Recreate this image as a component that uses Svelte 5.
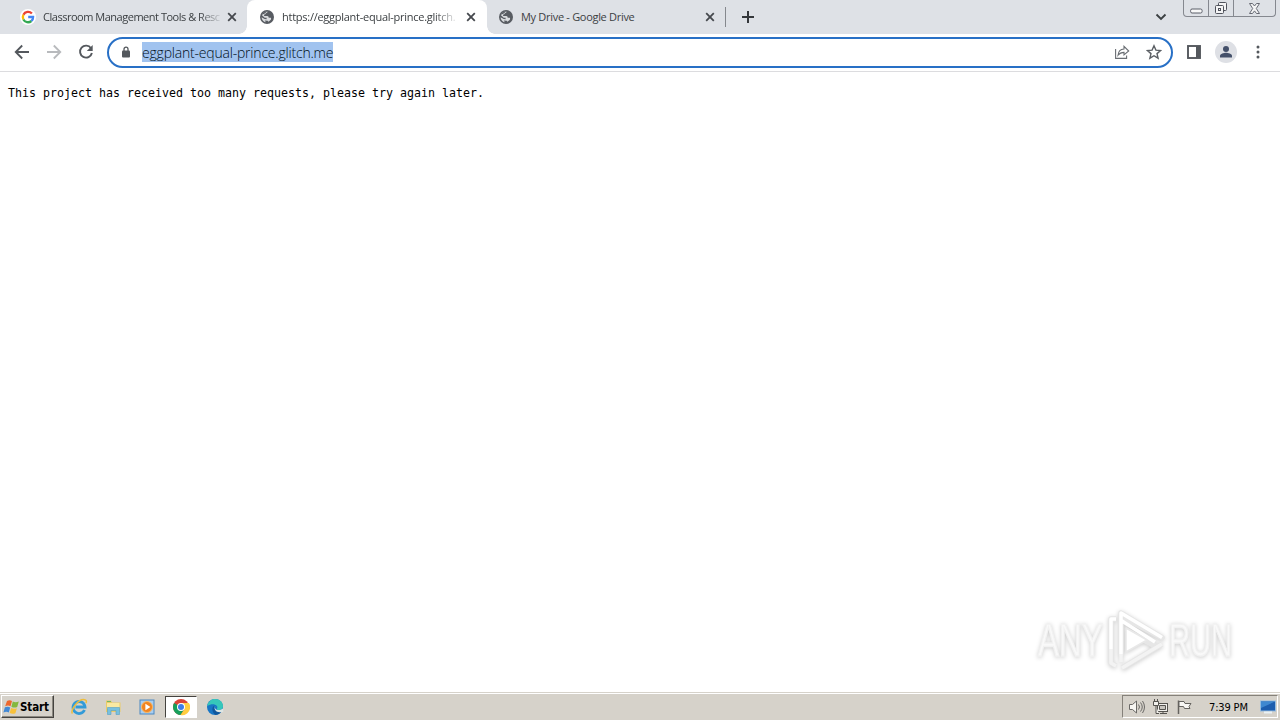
<script lang="ts">
	interface Tab {
		title: string;
		icon: 'google' | 'globe';
		active: boolean;
		fade: boolean;
		tracking: number;
	}

	const tabs: Tab[] = [
		{ title: 'Classroom Management Tools & Resc', icon: 'google', active: false, fade: true, tracking: -0.48 },
		{ title: 'https://eggplant-equal-prince.glitch.', icon: 'globe', active: true, fade: true, tracking: -0.26 },
		{ title: 'My Drive - Google Drive', icon: 'globe', active: false, fade: false, tracking: -0.3 }
	];

	let url = $state('eggplant-equal-prince.glitch.me');
	let clock = $state('7:39 PM');
</script>

{#snippet googleIcon()}
	<svg class="favicon" viewBox="0 0 16 16">
		<circle cx="8" cy="8" r="8" fill="#fff" />
		<g fill="none" stroke-width="2.3">
			<path d="M11.9 4.5A5.2 5.2 0 0 0 3.4 5.7" stroke="#ea4335" />
			<path d="M3.4 5.7a5.2 5.2 0 0 0 0 4.7" stroke="#fbbc05" />
			<path d="M3.4 10.4a5.2 5.2 0 0 0 8 1.6" stroke="#34a853" />
			<path d="M11.4 12A5.2 5.2 0 0 0 13.1 8H8.2" stroke="#4285f4" />
		</g>
	</svg>
{/snippet}

{#snippet globeIcon()}
	<svg class="favicon" viewBox="0 0 16 16">
		<circle cx="8" cy="8" r="7" fill="#585c62" />
		<path
			d="M8.5 2.600c0 1.200-.6 1.600-1.700 1.600-.3 1-.8 1.300-1.700 1.300v1.500h3.200c1 .1 1.400.8 1.400 1.700h2.100c.4.4.3 1.100.2 1.800-.7.900-1.700 1.700-2.800 2.300l-.5-1.100-3-.2 1.200 1.700C4.500 12.700 2.600 10.900 2.600 8.200l3 1.900 2 .1V8.700H5.700L3 6.300C3.700 4.200 5.800 2.500 8.500 2.600z"
			fill="#eceef0"
			opacity=".88"
		/>
		<path d="M3.300 5.800L6 4.300l2.300-1.700h-2L4 4z" fill="#585c62" />
	</svg>
{/snippet}

<div class="screen">
	<header class="tab-strip">
		<div class="tabs">
			{#each tabs as tab}
				<div class="tab" class:active={tab.active}>
					{#if tab.icon === 'google'}
						{@render googleIcon()}
					{:else}
						{@render globeIcon()}
					{/if}
					<span class="tab-title" class:fade={tab.fade} style="letter-spacing: {tab.tracking}px">{tab.title}</span>
					<svg class="tab-close" viewBox="0 0 10 10">
						<path d="M1.2 1.2l7.6 7.6M8.8 1.2l-7.6 7.6" stroke="#45484d" stroke-width="1.8" />
					</svg>
				</div>
			{/each}
		</div>
		<span class="separator"></span>
		<svg class="new-tab" viewBox="0 0 12 12">
			<path d="M6 0v12M0 6h12" stroke="#34373b" stroke-width="2" />
		</svg>
		<svg class="tab-search" viewBox="0 0 12 8">
			<path d="M1.5 1.5L6 6l4.5-4.5" fill="none" stroke="#3c4043" stroke-width="1.9" />
		</svg>
		<div class="window-controls">
			<span class="control minimize">
				<svg viewBox="0 0 13 6"><rect x=".6" y="1" width="11.5" height="4" rx="1.5" fill="#f8f8f8" stroke="#5b5e68" /></svg>
			</span>
			<span class="control restore">
				<svg viewBox="0 0 14 14" fill="#f4f4f5" stroke="#50535c">
					<rect x="4.5" y="1.5" width="8" height="8" rx="1" />
					<rect x="1.5" y="4.5" width="8" height="8" rx="1" />
					<rect x="4.5" y="7.5" width="2" height="2" />
				</svg>
			</span>
			<span class="control close">
				<svg viewBox="0 0 13 11">
					<path d="M1.5.5h3l2 2.5 2-2.5h3L8.300 5.500l3.200 5h-3l-2-2.600-2 2.600h-3l3.200-5z" fill="#f4f4f5" stroke="#666973" />
				</svg>
			</span>
		</div>
	</header>

	<nav class="toolbar">
		<svg class="nav-icon" viewBox="0 0 16 16" fill="none" stroke="#54585d" stroke-width="1.8">
			<path d="M15 8H2M8.2 1.5L1.7 8l6.5 6.5" />
		</svg>
		<svg class="nav-icon" viewBox="0 0 16 16" fill="none" stroke="#b8babd" stroke-width="1.8">
			<path d="M1 8h13M7.8 1.5L14.3 8l-6.5 6.5" />
		</svg>
		<svg class="nav-icon" viewBox="0 0 16 16">
			<path d="M13 4.2A6 6 0 1 0 13.9 9" fill="none" stroke="#54585d" stroke-width="1.9" />
			<path d="M14.7 1v6H8.8z" fill="#54585d" />
		</svg>
		<div class="omnibox">
			<svg class="lock" viewBox="0 0 10 12">
				<rect x="1" y="4.5" width="8" height="7" rx="1" fill="#54585d" />
				<path d="M3 5V3.2a2 2 0 0 1 4 0V5" fill="none" stroke="#54585d" stroke-width="1.3" />
			</svg>
			<span class="url">{url}</span>
			<svg class="share" viewBox="0 0 16 16" fill="none" stroke="#6a6e73" stroke-width="1.1">
				<path d="M1.6 5v9.4h11v-2.800" />
				<path d="M4 11.200c.4-4 2.400-6 6-6.200V2.400L14.700 7 10 10.900V8.400c-2.600 0-4.500.9-6 2.800z" />
			</svg>
			<svg class="star" viewBox="0 0 16 16">
				<path d="M8 1.800l1.900 4.300 4.700.4-3.600 3.100 1.100 4.600L8 11.700l-4.100 2.500L5 9.600 1.400 6.500l4.700-.4z" fill="none" stroke="#5b5f64" stroke-width="1.4" />
			</svg>
		</div>
		<svg class="side-panel" viewBox="0 0 14 14">
			<rect x="1" y="1" width="12" height="12" fill="#fff" stroke="#54585d" stroke-width="1.9" />
			<path d="M9 1h4v12H9z" fill="#54585d" />
		</svg>
		<svg class="avatar" viewBox="0 0 22 22">
			<circle cx="11" cy="11" r="11" fill="#dee0e5" />
			<circle cx="11" cy="8" r="3" fill="#44506a" />
			<path d="M5 16.500v-1.700c0-2 4-3 6-3s6 1 6 3v1.700z" fill="#44506a" />
		</svg>
		<svg class="menu" viewBox="0 0 4 14" fill="#54585d">
			<circle cx="2" cy="2" r="1.5" />
			<circle cx="2" cy="7" r="1.5" />
			<circle cx="2" cy="12" r="1.5" />
		</svg>
	</nav>

	<main>
		<pre>This project has received too many requests, please try again later.</pre>
		<div class="watermark">
			<span class="word any">ANY</span>
			<svg viewBox="0 0 60 64" fill="none" stroke-linejoin="round">
				<g stroke="#e6e6e6" stroke-width="5.5">
					<path d="M14 48V5l41 24.5L17 10M20 23l30 16" />
					<path d="M9 11H4v44l5 3M15 60l40-24" />
				</g>
				<g stroke="#fff" stroke-width="3.5">
					<path d="M14 46V5l41 24.5M15 13l33 21" />
					<path d="M9 11H4v30" />
				</g>
				<path d="M4 41v14l5 3M15 60l40-24M14 46v8" stroke="#f3f3f3" stroke-width="3.5" />
				<path d="M19 20v24l21-12z" fill="#fff" stroke="#e8e8e8" stroke-width="1.5" />
			</svg>
			<span class="word run">RUN</span>
		</div>
	</main>

	<footer class="taskbar">
		<div class="start">
			<svg viewBox="0 0 17 16">
				<path d="M4 2c2-1.2 3.5-.9 5-.1L7.5 7.300C6 6.500 4.500 6.300 2.200 7.200z" fill="#ed672d" />
				<path d="M9.800 2.500c1.500.9 3.500 1.200 6 .1l-1.600 5.400c-2.300 1-4.200.6-5.800-.3z" fill="#84b83e" />
				<path d="M1.900 8.300c2.200-.9 3.800-.7 5.300.1l-1.400 5c-1.600-.8-3.200-.9-5.400 0z" fill="#4289d5" />
				<path d="M8.100 9c1.600.8 3.300 1.100 5.800.2l-1.500 5.100c-2.300.9-4.100.5-5.700-.3z" fill="#f8c13a" />
			</svg>
			<span>Start</span>
		</div>
		<div class="launchers">
			<span class="launcher">
				<svg viewBox="0 0 18 18" fill="none">
					<path d="M14.5 12a6 6 0 1 1 .5-3H5.500" stroke="#329bd8" stroke-width="2.8" />
					<path d="M2.500 15.500C-.5 13 9-1 15.700 2.100c1 .5.8 1.900.2 3" stroke="#edbd3c" stroke-width="1.5" />
				</svg>
			</span>
			<span class="launcher">
				<svg viewBox="0 0 18 18">
					<path d="M2 2.500h5l1 2h8.500V14H2z" fill="#e9cb68" />
					<path d="M3 5h12.500v6H3z" fill="#f9e9a2" />
					<path d="M3 3h4v1H3z" fill="#72b866" />
					<path d="M3.500 16.500v-7h12v7H12v-4H7v4z" fill="#77c0df" stroke="#559fc4" stroke-width=".6" />
				</svg>
			</span>
			<span class="launcher">
				<svg viewBox="0 0 18 18">
					<rect x="2" y="2" width="14" height="14" fill="#a9cdef" stroke="#4b88c1" />
					<circle cx="9" cy="9" r="5.5" fill="#f18420" stroke="#f8ba69" />
					<path d="M7.400 5.800l5 3.200-5 3.200z" fill="#fff" />
				</svg>
			</span>
			<span class="launcher pressed">
				<svg viewBox="0 0 18 18">
					<circle cx="9" cy="9" r="8" fill="#db4437" />
					<path d="M9 9L2.100 5A8 8 0 0 0 8.500 17l4-6z" fill="#16a05c" />
					<path d="M9 5h7.900A8 8 0 0 1 8.500 17l4-6z" fill="#ffcd40" />
					<circle cx="9" cy="9" r="4" fill="#fff" />
					<circle cx="9" cy="9" r="3" fill="#3e7de8" />
				</svg>
			</span>
			<span class="launcher">
				<svg viewBox="0 0 18 18">
					<circle cx="9" cy="9" r="8" fill="#1876c5" />
					<path d="M1.200 8C2 3.700 5.300 1 9 1c5 0 8 3.500 8 7 0 3-2.300 4-4 4-1.500 0-2.600-.5-2-1.500 2-3-3.800-6.500-9.800-2.500z" fill="#36c7ba" />
					<path d="M8.700 7.300c-2 2 .3 6.200 7 5.700-1 1.900-3.500 3.900-6.100 4C6 15 5 9.200 8.700 7.300z" fill="#10579d" />
					<path d="M9.500 8c-1.800 1.700.2 4.500 4.500 4l3.200-1.500V14l-2 .2C10 15 7 10.500 9.500 8z" fill="#dce6e5" />
				</svg>
			</span>
		</div>
		<div class="tray">
			<svg class="tray-icon" viewBox="0 0 18 16" fill="#f7f6f2" stroke="#6a6966">
				<path d="M1.500 5.500h3L8.500 2v12l-4-3.500h-3z" />
				<path d="M10.500 5.500q2 2.500 0 5M12.500 3.500q3.500 4.500 0 9M14.500 2q4 6 0 12" fill="none" />
			</svg>
			<svg class="tray-icon" viewBox="0 0 18 16" fill="#f1f0ec" stroke="#55534f">
				<rect x="5.500" y="4.500" width="10" height="8" />
				<path d="M7.500 6.500h6v4h-6z" fill="#c8c5bf" />
				<path d="M8 14.500h7M11 12.500v2M2.500 0v2M5.500 0v2M1.500 2.500h5v4h-5zM4 7v7.500h3" />
			</svg>
			<svg class="tray-icon" viewBox="0 0 18 16" fill="#f8f7f4" stroke="#65635f">
				<path d="M2.500 15V1.500" stroke-width="1.5" />
				<path d="M3 2.500h5l1 2h6l-2 3 1 2H8.500l-1-2H3z" />
			</svg>
			<span class="clock">{clock}</span>
			<svg class="desktop" viewBox="0 0 16 14">
				<rect x=".5" y="1" width="15" height="10" fill="#1d5dae" stroke="#95bce0" />
				<path d="M1 1.500h14L1 8z" fill="#3f88d0" />
				<path d="M4 12.500h8" stroke="#e9f1f5" stroke-width="2" />
			</svg>
		</div>
	</footer>
</div>

<style>
	:global(body) {
		margin: 0;
		overflow: hidden;
	}

	.screen {
		width: 1280px;
		height: 720px;
		display: flex;
		flex-direction: column;
		background: #fff;
		font-family: 'DejaVu Sans Condensed', 'DejaVu Sans', sans-serif;
	}

	svg {
		display: block;
		flex: none;
	}

	.tab-strip {
		height: 34px;
		flex: none;
		display: flex;
		align-items: center;
		background: #dee1e6;
	}

	.tabs {
		display: flex;
		align-self: stretch;
		padding-left: 8px;
	}

	.tab {
		width: 239px;
		box-sizing: border-box;
		display: flex;
		align-items: center;
		padding: 0 10px 0 12px;
	}

	.tab.active {
		width: 240px;
		padding-right: 11px;
		position: relative;
		background: #fff;
		border-radius: 8px 8px 0 0;
	}

	.tab.active + .tab {
		width: 238px;
		padding-left: 11px;
	}

	/* flared feet of the active tab */
	.tab.active::before,
	.tab.active::after {
		content: '';
		position: absolute;
		bottom: 0;
		width: 8px;
		height: 8px;
	}

	.tab.active::before {
		left: -8px;
		background: radial-gradient(circle at 0 0, transparent 7.5px, #fff 8px);
	}

	.tab.active::after {
		right: -8px;
		background: radial-gradient(circle at 100% 0, transparent 7.5px, #fff 8px);
	}

	.favicon {
		width: 16px;
		height: 16px;
	}

	.tab-title {
		margin-left: 7px;
		white-space: nowrap;
		font-family: 'Open Sans', sans-serif;
		font-size: 11px;
		line-height: 18px;
		color: #3c4043;
	}

	.fade {
		mask-image: linear-gradient(to right, #000 88%, rgba(0, 0, 0, 0.15));
	}

	.tab-close {
		width: 10px;
		height: 10px;
		margin-left: auto;
	}

	.separator {
		width: 1px;
		height: 20px;
		background: #85888d;
	}

	.new-tab {
		width: 12px;
		height: 12px;
		margin-left: 16px;
	}

	.tab-search {
		width: 12px;
		height: 8px;
		margin-left: auto;
	}

	.window-controls {
		align-self: flex-start;
		display: flex;
		height: 17px;
		box-sizing: border-box;
		margin: 0 4px 0 16px;
		border: 1px solid #85888f;
		border-top: none;
		border-radius: 0 0 4px 4px;
	}

	.control {
		display: flex;
		align-items: center;
		justify-content: center;
		width: 24px;
	}

	.control + .control {
		border-left: 1px solid #85888f;
	}

	.minimize svg {
		width: 13px;
		height: 6px;
		margin-top: 5px;
	}

	.restore svg {
		width: 14px;
		height: 14px;
	}

	.control.close {
		width: 41px;
	}

	.close svg {
		width: 13px;
		height: 11px;
	}

	.toolbar {
		height: 38px;
		flex: none;
		box-sizing: border-box;
		display: flex;
		align-items: center;
		padding: 0 20px 0 14px;
		border-bottom: 1px solid #dcdcdf;
	}

	.nav-icon {
		width: 16px;
		height: 16px;
		margin: 0 16px 1px 0;
	}

	.omnibox {
		width: 1066px;
		height: 31px;
		box-sizing: border-box;
		display: flex;
		align-items: center;
		margin-left: -3px;
		padding: 0 9px 0 12px;
		border: 2px solid #2870c6;
		border-radius: 16px;
	}

	.lock {
		width: 10px;
		height: 12px;
		margin-bottom: 1px;
	}

	.url {
		height: 20px;
		margin: 0 0 1px 11px;
		background: #a1c3ef;
		color: #001020;
		font-family: 'Open Sans', sans-serif;
		font-size: 14px;
		font-weight: 300;
		line-height: 21px;
		letter-spacing: -0.2px;
		white-space: nowrap;
	}

	.share {
		width: 16px;
		height: 16px;
		margin: 0 0 1px auto;
	}

	.star {
		width: 16px;
		height: 16px;
		margin: 0 0 1px 16px;
	}

	.side-panel {
		width: 14px;
		height: 14px;
		margin: 0 0 1px 14px;
	}

	.avatar {
		width: 22px;
		height: 22px;
		margin: 0 0 1px 14px;
	}

	.menu {
		width: 4px;
		height: 14px;
		margin: 0 0 1px auto;
	}

	main {
		flex: 1;
		display: flex;
		flex-direction: column;
		justify-content: space-between;
	}

	pre {
		margin: 14px 8px;
		font-family: 'DejaVu Sans Mono', monospace;
		font-size: 11.63px;
		line-height: 15px;
		color: #000;
	}

	.watermark {
		display: flex;
		align-items: center;
		align-self: flex-end;
		width: 196px;
		height: 64px;
		margin: 0 46px 20px 0;
		filter: drop-shadow(0 1px 2px rgba(0, 0, 0, 0.2));
	}

	.watermark svg {
		width: 60px;
		height: 64px;
		margin: 0 2px 0 4px;
	}

	.word {
		width: 65px;
		font-family: 'Liberation Sans', sans-serif;
		font-size: 47px;
		line-height: 50px;
		white-space: nowrap;
		color: #f9f9f9;
		-webkit-text-stroke: 1.5px #f2f2f2;
		transform-origin: left center;
	}

	.any {
		transform: scaleX(0.67);
	}

	.run {
		transform: scaleX(0.62);
	}

	.taskbar {
		height: 28px;
		flex: none;
		box-sizing: border-box;
		display: flex;
		align-items: center;
		padding: 0 2px 0 1px;
		background: #d6d2ca;
		border-top: 1px solid #d6d2ca;
		box-shadow: inset 0 1px #fff;
	}

	.start {
		width: 53px;
		height: 23px;
		box-sizing: border-box;
		display: flex;
		align-items: center;
		border: 1px solid;
		border-color: #fff #45433f #45433f #fff;
		box-shadow: inset -1px -1px #8b8880;
		padding-left: 1px;
		font-size: 11.5px;
		font-weight: bold;
		color: #000;
	}

	.start svg {
		width: 17px;
		height: 16px;
	}

	.start span {
		padding-top: 1px;
		letter-spacing: -0.1px;
	}

	.launchers {
		display: flex;
		margin-left: 9px;
		gap: 2px;
	}

	.launcher {
		width: 32px;
		height: 22px;
		box-sizing: border-box;
		display: flex;
		align-items: center;
		justify-content: center;
	}

	.launcher svg {
		width: 18px;
		height: 18px;
	}

	.pressed {
		background: #fff;
		border: 1px solid;
		border-color: #45433f #fff #fff #45433f;
	}

	.tray {
		width: 156px;
		height: 23px;
		box-sizing: border-box;
		display: flex;
		align-items: center;
		margin-left: auto;
		border: 1px solid;
		border-color: #85817a #fff #fff #85817a;
		padding: 0 1px 0 5px;
	}

	.tray-icon {
		width: 18px;
		height: 16px;
		margin-right: 6px;
	}

	.clock {
		margin-left: 9px;
		padding-top: 1px;
		font-size: 11px;
		letter-spacing: -0.15px;
		white-space: nowrap;
		color: #000;
	}

	.desktop {
		width: 16px;
		height: 14px;
		margin-left: auto;
	}
</style>
